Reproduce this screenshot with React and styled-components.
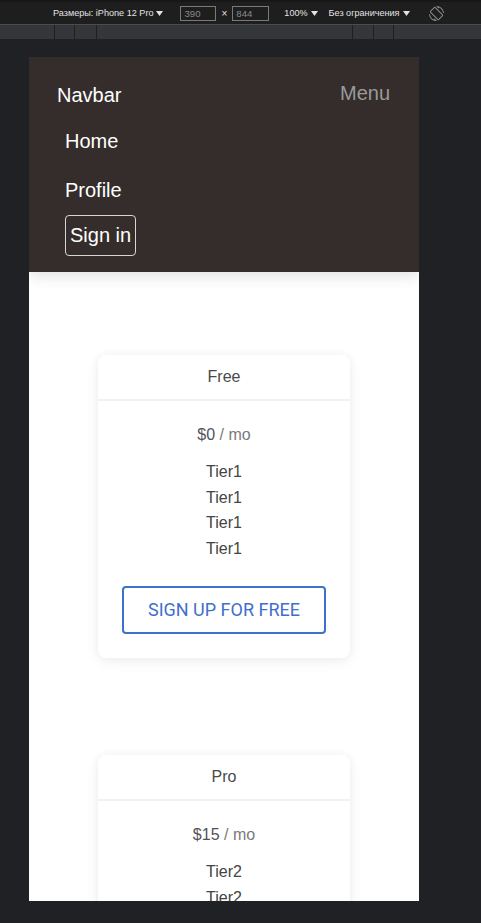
import React from 'react';
import styled, { createGlobalStyle } from 'styled-components';

const GlobalStyle = createGlobalStyle`
  html, body {
    margin: 0;
    padding: 0;
    background: #202124;
  }
  body {
    font-family: "Liberation Sans", Arial, sans-serif;
  }
  * {
    box-sizing: border-box;
  }
`;

const PLANS = [
  { id: 'free', title: 'Free', price: '$0', tier: 'Tier1', action: 'Sign up for free' },
  { id: 'pro', title: 'Pro', price: '$15', tier: 'Tier2', action: 'Get started' },
];

const RULER_SEGMENTS = [54, 20, 22, 256, 21, 20];

/* devtools chrome */

const Page = styled.div`
  width: 100%;
  min-height: 923px;
  background: #202124;
  overflow: hidden;
`;

const DevToolbar = styled.div`
  height: 24px;
  display: flex;
  align-items: center;
  padding-left: 53px;
  background: #1e1e1e;
  border-top: 2px solid #171717;
  color: #e3e3e3;
  font-size: 9.1px;
  white-space: nowrap;
`;

const ToolLabel = styled.span`
  display: flex;
  align-items: center;
  gap: 3px;
  margin-left: ${({ $ml }) => $ml || 0}px;
`;

const SizeBox = styled.span`
  width: ${({ $w }) => $w}px;
  height: 15px;
  margin-left: ${({ $ml }) => $ml || 0}px;
  border: 1px solid #7a7a7a;
  color: #8a8a8a;
  padding: 0 3px;
  font-size: 9.6px;
  line-height: 13px;
`;

const Times = styled.span`
  margin-left: 5px;
  color: #e3e3e3;
  font-size: 10px;
`;

const IconSlot = styled.span`
  display: flex;
  margin-left: ${({ $ml }) => $ml || 0}px;
  color: #8c8c8c;
`;

const Ruler = styled.div`
  height: 15px;
  display: flex;
  background: #35363a;
  border-top: 1px solid #4a4b4e;
`;

const RulerSegment = styled.div`
  flex: ${({ $w }) => ($w ? `0 0 ${$w}px` : '1')};
  border-left: ${({ $first }) => ($first ? 'none' : '1px solid #1f1f21')};
`;

const Stage = styled.div`
  padding: 18px 0 0 29px;
`;

const Viewport = styled.div`
  width: 390px;
  height: 844px;
  background: #fff;
  overflow: hidden;
`;

/* the page inside the device */

const Navbar = styled.nav`
  position: relative;
  z-index: 1;
  background: #342d2c;
  padding: 26px 29px 16px 28px;
  box-shadow: 0 4px 14px rgba(0, 0, 0, 0.12);
`;

const BrandRow = styled.div`
  display: flex;
  justify-content: space-between;
  align-items: flex-start;
`;

const Brand = styled.a`
  color: #fff;
  font-size: 20px;
  line-height: 24px;
  text-decoration: none;
`;

const MenuButton = styled.button`
  margin-top: -2px;
  padding: 0;
  border: none;
  background: none;
  color: #9a9a9a;
  font-family: inherit;
  font-size: 20px;
  line-height: 24px;
`;

const NavList = styled.ul`
  list-style: none;
  margin: 10px 0 0 8px;
  padding: 0;
`;

const NavLink = styled.a`
  display: block;
  color: #fff;
  font-size: 20px;
  line-height: 49px;
  text-decoration: none;
`;

const SignIn = styled.button`
  display: block;
  padding: 7px 4px 8px;
  border: 1px solid #d6d6d6;
  border-radius: 4px;
  background: transparent;
  color: #fff;
  font-family: inherit;
  font-size: 20px;
  line-height: 24px;
`;

const Main = styled.main`
  display: flex;
  flex-direction: column;
  align-items: center;
  gap: 97px;
  padding: 83px 0 40px;
`;

const Card = styled.section`
  width: 252px;
  background: #fff;
  border-radius: 8px;
  box-shadow: 0 0 10px rgba(0, 0, 0, 0.05), 0 4px 14px rgba(0, 0, 0, 0.05);
`;

const CardHeader = styled.h4`
  margin: 0;
  padding: 10px;
  border-bottom: 2px solid #f1f1f1;
  color: #4a4a4a;
  font-size: 16px;
  font-weight: 400;
  line-height: 24px;
  text-align: center;
`;

const CardBody = styled.div`
  padding: 22px 24px 24px;
  text-align: center;
`;

const Price = styled.p`
  margin: 0;
  color: #4f5359;
  font-size: 16px;
  line-height: 24px;
`;

const Per = styled.span`
  color: #7a7a7a;
`;

const TierList = styled.ul`
  list-style: none;
  margin: 12px 0 0;
  padding: 0;
  color: #444;
  font-size: 16px;
  line-height: 25.6px;
`;

const OutlineButton = styled.button`
  display: block;
  width: 100%;
  margin-top: 25px;
  padding: 10px 0;
  border: 2px solid #3a73c9;
  border-radius: 4px;
  background: #fff;
  color: #3f6fcb;
  font-family: Roboto, "Liberation Sans", sans-serif;
  font-size: 18px;
  line-height: 24px;
  text-transform: uppercase;
`;

const Caret = () => (
  <svg width="7" height="5" viewBox="0 0 7 5">
    <path d="M0 0h7L3.5 5z" fill="#e3e3e3" />
  </svg>
);

const RotateIcon = () => (
  <svg width="15" height="15" viewBox="0 0 24 24" fill="currentColor">
    <path d="M16.48 2.52c3.27 1.55 5.61 4.72 5.970 8.48h1.5C23.44 4.84 18.29 0 12 0l-.66.03 3.81 3.81 1.33-1.32zm-6.25-.77c-.59-.59-1.54-.59-2.12 0L1.75 8.11c-.59.59-.59 1.54 0 2.12l12.02 12.02c.59.59 1.540.59 2.12 0l6.36-6.36c.59-.59.59-1.54 0-2.12L10.23 1.750zm4.6 19.44L2.81 9.17l6.36-6.36 12.02 12.02-6.36 6.36zm-7.31.29C4.25 19.94 1.91 16.76 1.55 13H.05C.56 19.16 5.71 24 12 24l.66-.03-3.81-3.81-1.33 1.32z" />
  </svg>
);

const PlanCard = ({ plan }) => (
  <Card>
    <CardHeader>{plan.title}</CardHeader>
    <CardBody>
      <Price>
        {plan.price} <Per>/ mo</Per>
      </Price>
      <TierList>
        {[0, 1, 2, 3].map((i) => (
          <li key={i}>{plan.tier}</li>
        ))}
      </TierList>
      <OutlineButton>{plan.action}</OutlineButton>
    </CardBody>
  </Card>
);

const App = () => {
  return (
    <Page>
      <GlobalStyle />
      <DevToolbar>
        <ToolLabel>
          Размеры: iPhone 12 Pro <Caret />
        </ToolLabel>
        <SizeBox $w={36} $ml={17}>390</SizeBox>
        <Times>×</Times>
        <SizeBox $w={37} $ml={5}>844</SizeBox>
        <ToolLabel $ml={15}>
          100% <Caret />
        </ToolLabel>
        <ToolLabel $ml={11}>
          Без ограничения <Caret />
        </ToolLabel>
        <IconSlot $ml={19}>
          <RotateIcon />
        </IconSlot>
      </DevToolbar>
      <Ruler>
        {RULER_SEGMENTS.map((w, i) => (
          <RulerSegment key={i} $w={w} $first={i === 0} />
        ))}
        <RulerSegment />
      </Ruler>
      <Stage>
        <Viewport>
          <Navbar>
            <BrandRow>
              <Brand href="#">Navbar</Brand>
              <MenuButton>Menu</MenuButton>
            </BrandRow>
            <NavList>
              <li>
                <NavLink href="#">Home</NavLink>
              </li>
              <li>
                <NavLink href="#">Profile</NavLink>
              </li>
              <li>
                <SignIn>Sign in</SignIn>
              </li>
            </NavList>
          </Navbar>
          <Main>
            {PLANS.map((plan) => (
              <PlanCard key={plan.id} plan={plan} />
            ))}
          </Main>
        </Viewport>
      </Stage>
    </Page>
  );
};

export default App;
